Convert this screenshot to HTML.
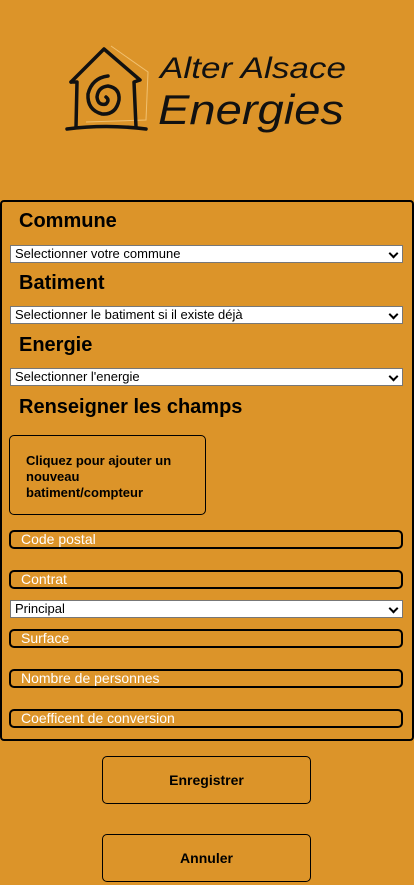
<!DOCTYPE html>
<html><head><meta charset="utf-8"><style>
*{box-sizing:border-box;margin:0;padding:0}
body{width:414px;height:885px;background:#dc9429;font-family:"Liberation Sans",sans-serif;position:relative;overflow:hidden}
.abs{position:absolute}
.panel{left:0;top:200px;width:414px;height:541px;border:2px solid #000;border-radius:4px}
h2{position:absolute;left:19px;font-size:20px;font-weight:bold;color:#000;line-height:24px}
.sel{position:absolute;left:10px;width:393px;height:18px;background:#fff;border:1px solid #777;font-size:13px;line-height:16px;padding-left:4px;color:#000}
.sel:after{content:"";position:absolute;right:5px;top:4px;width:5px;height:5px;border-right:2px solid #000;border-bottom:2px solid #000;transform:rotate(45deg)}
.inp{position:absolute;left:9px;width:394px;height:19px;border:2px solid #000;border-radius:5px;color:#fff;font-size:14px;line-height:15px;padding-left:10px}
.btn{position:absolute;border:1px solid #000;border-radius:5px;font-weight:bold;color:#000}
</style></head><body>
<svg class="abs" style="left:0;top:0" width="414" height="160">
<g fill="none" stroke="#f0c070" stroke-width="1"><path d="M111 46 L148 72 L146 120 L86 122"/></g>
<g fill="none" stroke="#111" stroke-width="3.5" stroke-linecap="round" stroke-linejoin="round">
<path d="M71 82 L104 49 L140 80 L134 82 L136 127"/>
<path d="M71 82 L77 82 L76 127"/>
<path d="M67 129 Q106 124 146 129"/>
<path d="M106 97 Q110 100 106 104 Q98 106 97 97 Q98 87 108 86 Q120 88 119 100 Q116 115 102 114 Q87 110 88 94 Q92 78 108 76"/>
</g>
<text x="160" y="78" font-family="Liberation Sans" font-style="italic" font-size="30" fill="#111" textLength="186" lengthAdjust="spacingAndGlyphs">Alter Alsace</text>
<text x="158" y="124" font-family="Liberation Sans" font-style="italic" font-size="42" fill="#111" textLength="186" lengthAdjust="spacingAndGlyphs">Energies</text>
</svg>
<div class="abs panel"></div>
<h2 style="top:209px">Commune</h2>
<div class="sel" style="top:245px">Selectionner votre commune</div>
<h2 style="top:271px">Batiment</h2>
<div class="sel" style="top:306px">Selectionner le batiment si il existe déjà</div>
<h2 style="top:333px">Energie</h2>
<div class="sel" style="top:368px">Selectionner l'energie</div>
<h2 style="top:395px">Renseigner les champs</h2>
<div class="btn" style="left:9px;top:435px;width:197px;height:80px;font-size:13px;line-height:16px;padding:17px 22px 0 16px">Cliquez pour ajouter un nouveau batiment/compteur</div>
<div class="inp" style="top:530px">Code postal</div>
<div class="inp" style="top:570px">Contrat</div>
<div class="sel" style="top:600px">Principal</div>
<div class="inp" style="top:629px">Surface</div>
<div class="inp" style="top:669px">Nombre de personnes</div>
<div class="inp" style="top:709px">Coefficent de conversion</div>
<div class="btn" style="left:102px;top:756px;width:209px;height:48px;font-size:14px;line-height:46px;text-align:center">Enregistrer</div>
<div class="btn" style="left:102px;top:834px;width:209px;height:48px;font-size:14px;line-height:46px;text-align:center">Annuler</div>
</body></html>
